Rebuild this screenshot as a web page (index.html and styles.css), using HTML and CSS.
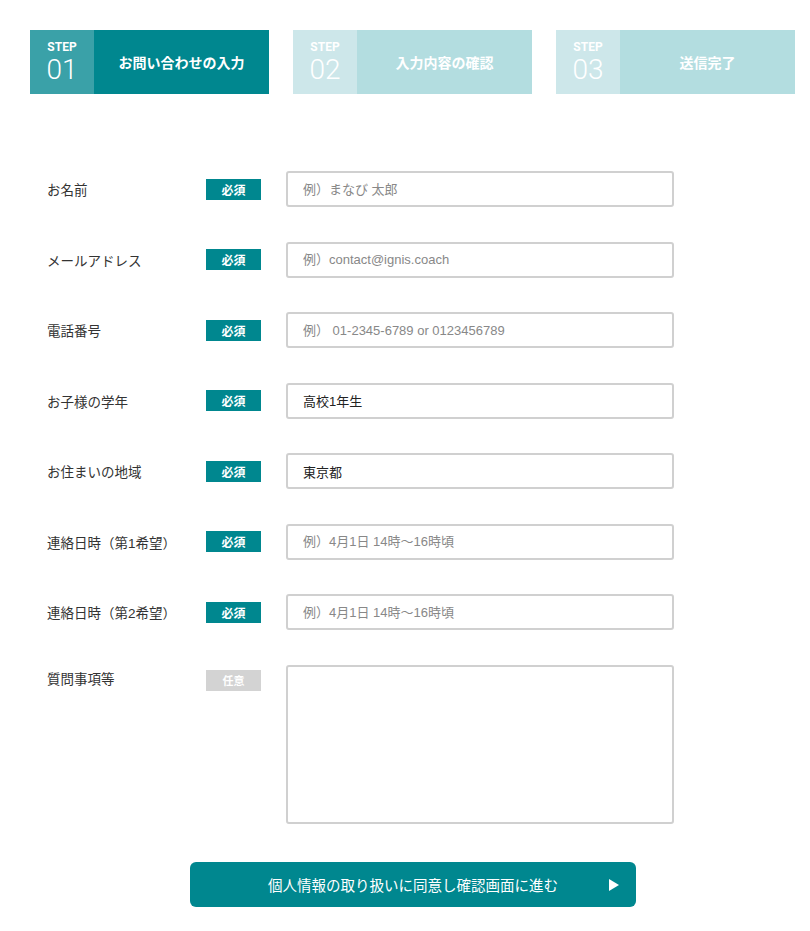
FILE: index.html
```html
<!DOCTYPE html>
<html lang="ja">
<head>
    <meta charset="UTF-8">
    <meta name="viewport" content="width=device-width, initial-scale=1.0">
    <title>お問い合わせ</title>
    <link rel="stylesheet" href="styles.css">
</head>
<body>
    <ol class="steps">
        <li class="step active">
            <div class="step-num"><span class="step-label">STEP</span><span class="step-no">01</span></div>
            <div class="step-title">お問い合わせの入力</div>
        </li>
        <li class="step">
            <div class="step-num"><span class="step-label">STEP</span><span class="step-no">02</span></div>
            <div class="step-title">入力内容の確認</div>
        </li>
        <li class="step">
            <div class="step-num"><span class="step-label">STEP</span><span class="step-no">03</span></div>
            <div class="step-title">送信完了</div>
        </li>
    </ol>

    <form class="contact-form">
        <div class="row">
            <label class="label">お名前</label>
            <span class="badge">必須</span>
            <input class="field" type="text" placeholder="例）まなび 太郎">
        </div>
        <div class="row">
            <label class="label">メールアドレス</label>
            <span class="badge">必須</span>
            <input class="field" type="text" placeholder="例）contact@ignis.coach">
        </div>
        <div class="row">
            <label class="label">電話番号</label>
            <span class="badge">必須</span>
            <input class="field" type="text" placeholder="例） 01-2345-6789 or 0123456789">
        </div>
        <div class="row">
            <label class="label">お子様の学年</label>
            <span class="badge">必須</span>
            <input class="field" type="text" value="高校1年生">
        </div>
        <div class="row">
            <label class="label">お住まいの地域</label>
            <span class="badge">必須</span>
            <input class="field" type="text" value="東京都">
        </div>
        <div class="row">
            <label class="label">連絡日時（第1希望）</label>
            <span class="badge">必須</span>
            <input class="field" type="text" placeholder="例）4月1日 14時～16時頃">
        </div>
        <div class="row">
            <label class="label">連絡日時（第2希望）</label>
            <span class="badge">必須</span>
            <input class="field" type="text" placeholder="例）4月1日 14時～16時頃">
        </div>
        <div class="row row-top">
            <label class="label">質問事項等</label>
            <span class="badge optional">任意</span>
            <textarea class="field area"></textarea>
        </div>
        <button type="button" class="submit">個人情報の取り扱いに同意し確認画面に進む<span class="arrow"></span></button>
    </form>
</body>
</html>
```

FILE: styles.css
```css
body {
    margin: 0;
    padding: 30px 14px 24px 30px;
    background-color: #fff;
    font-family: "Liberation Sans", "Noto Sans CJK JP", sans-serif;
    color: #333;
}
.steps {
    list-style: none;
    margin: 0;
    padding: 0;
    display: flex;
    gap: 24px;
}
.step {
    display: flex;
    width: 239px;
    height: 64px;
    background-color: #b3dde0;
    color: #fff;
}
.step-num {
    width: 64px;
    background-color: #cde7ea;
    display: flex;
    flex-direction: column;
    align-items: center;
    padding-top: 10px;
    box-sizing: border-box;
}
.step-label {
    font-family: "Roboto", "Liberation Sans", sans-serif;
    font-weight: bold;
    font-size: 12px;
    line-height: 14px;
}
.step-no {
    font-family: "Roboto", "Liberation Sans", sans-serif;
    font-weight: 300;
    font-size: 28px;
    line-height: 32px;
}
.step-title {
    flex: 1;
    display: flex;
    align-items: center;
    justify-content: center;
    font-family: "Noto Sans CJK JP", sans-serif;
    font-weight: bold;
    font-size: 14px;
}
.step.active {
    background-color: #00878f;
}
.step.active .step-num {
    background-color: #3aa1a8;
}
.contact-form {
    margin-top: 77px;
    display: flex;
    flex-direction: column;
    gap: 34.5px;
}
.row {
    display: flex;
    align-items: center;
}
.row-top {
    align-items: flex-start;
}
.label {
    width: 159px;
    padding-left: 17px;
    font-size: 13.5px;
    color: #333;
}
.row-top .label {
    padding-top: 3px;
}
.badge {
    width: 55px;
    height: 21px;
    line-height: 21px;
    text-align: center;
    background-color: #00878f;
    color: #fff;
    font-family: "Noto Sans CJK JP", sans-serif;
    font-size: 12px;
    font-weight: bold;
    margin-right: 25px;
}
.badge.optional {
    background-color: #d3d3d3;
    font-size: 11px;
    margin-top: 5px;
}
.field {
    width: 388px;
    height: 36px;
    box-sizing: border-box;
    border: 2px solid #d0d0d0;
    border-radius: 3px;
    padding: 0 15px;
    font-family: "Liberation Sans", "Noto Sans CJK JP", sans-serif;
    font-size: 13px;
    color: #222;
}
.field::placeholder {
    color: #888;
}
.area {
    height: 159px;
    resize: none;
}
.submit {
    align-self: flex-start;
    margin-left: 160px;
    margin-top: 4px;
    width: 446px;
    height: 45px;
    border: none;
    border-radius: 6px;
    background-color: #00878f;
    color: #fff;
    font-family: "Liberation Sans", "Noto Sans CJK JP", sans-serif;
    font-size: 14.5px;
    position: relative;
    cursor: pointer;
}
.arrow {
    position: absolute;
    right: 17px;
    top: 17px;
    width: 0;
    height: 0;
    border-left: 10px solid #fff;
    border-top: 6px solid transparent;
    border-bottom: 6px solid transparent;
}
```
